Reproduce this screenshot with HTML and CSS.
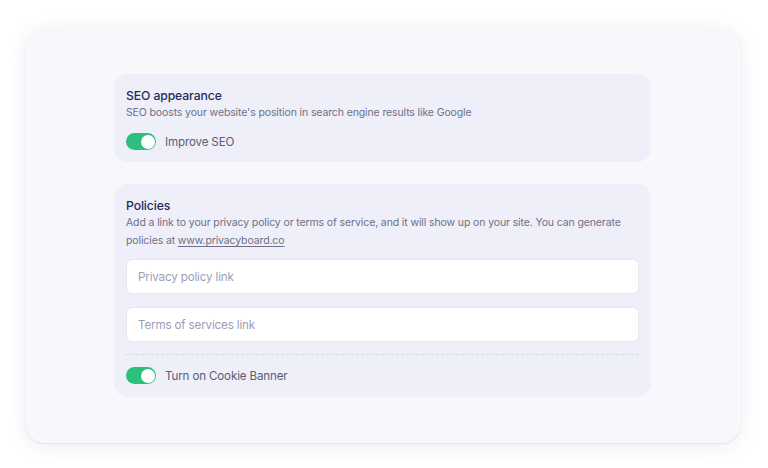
FILE: index.html
```html
<!DOCTYPE html>
<html lang="en">
<head>
<meta charset="utf-8">
<link rel="stylesheet" href="styles.css">
</head>
<body>
<div class="frame">
  <div class="content">
    <section class="card">
      <h2 class="title">SEO appearance</h2>
      <p class="desc">SEO boosts your website's position in search engine results like Google</p>
      <label class="toggle-row first">
        <span class="toggle"><span class="knob"></span></span>
        <span class="toggle-label">Improve SEO</span>
      </label>
    </section>
    <section class="card">
      <h2 class="title">Policies</h2>
      <p class="desc">Add a link to your privacy policy or terms of service, and it will show up on your site. You can generate policies at <a class="link" href="#">www.privacyboard.co</a></p>
      <div class="fields">
        <input class="field" type="text" placeholder="Privacy policy link">
        <input class="field" type="text" placeholder="Terms of services link">
      </div>
      <div class="divider"></div>
      <label class="toggle-row">
        <span class="toggle"><span class="knob"></span></span>
        <span class="toggle-label">Turn on Cookie Banner</span>
      </label>
    </section>
  </div>
</div>
</body>
</html>
```
FILE: styles.css
```css
* { box-sizing: border-box; }
html, body { margin: 0; padding: 0; background: #ffffff; }
body {
  font-family: Inter, "Noto Sans", sans-serif;
  width: 768px;
  height: 468px;
  overflow: hidden;
}
.frame {
  margin: 27px 0 0 25px;
  width: 716px;
  height: 416px;
  background: #f7f8fc;
  border-radius: 20px;
  box-shadow: 0 1px 2px rgba(40, 45, 110, 0.10), 0 4px 22px rgba(40, 45, 110, 0.07);
  padding: 47px 0 0 89px;
}
.content {
  width: 537px;
  display: flex;
  flex-direction: column;
  gap: 22px;
}
.card {
  background: #eeeff8;
  border-radius: 14px;
  padding: 14px 12px 12px 12px;
}
.card + .card { padding-bottom: 13px; }
.title {
  margin: 0;
  font-size: 12.2px;
  font-weight: 500;
  line-height: 16px;
  color: #262a59;
  letter-spacing: -0.1px;
}
.desc {
  margin: 0;
  font-size: 10.5px;
  line-height: 18px;
  color: #6e7088;
  letter-spacing: -0.12px;
}
.link { color: #6e7088; text-decoration: underline; text-underline-offset: 2px; }
.toggle-row {
  display: flex;
  align-items: center;
  gap: 9px;
  margin-top: 11px;
}
.toggle {
  width: 30px;
  height: 17px;
  border-radius: 9px;
  background: #2dbf7c;
  display: flex;
  align-items: center;
  justify-content: flex-end;
  padding: 0 1.5px;
}
.knob {
  width: 14px;
  height: 14px;
  border-radius: 50%;
  background: #ffffff;
}
.toggle-label {
  font-size: 11.6px;
  color: #5b5d78;
  letter-spacing: -0.15px;
}
.fields {
  margin-top: 9px;
  display: flex;
  flex-direction: column;
  gap: 13px;
}
.field {
  width: 100%;
  height: 35px;
  border: 1px solid #e6e7f1;
  border-radius: 6px;
  background: #ffffff;
  padding: 0 11px;
  font-family: Inter, "Noto Sans", sans-serif;
  font-size: 11.6px;
  letter-spacing: -0.15px;
  color: #262a59;
  outline: none;
}
.field::placeholder { color: #9c9db5; }
.divider {
  margin-top: 12px;
  border-top: 1px dashed #d9dae8;
}
.card .divider + .toggle-row { margin-top: 12px; }
```
